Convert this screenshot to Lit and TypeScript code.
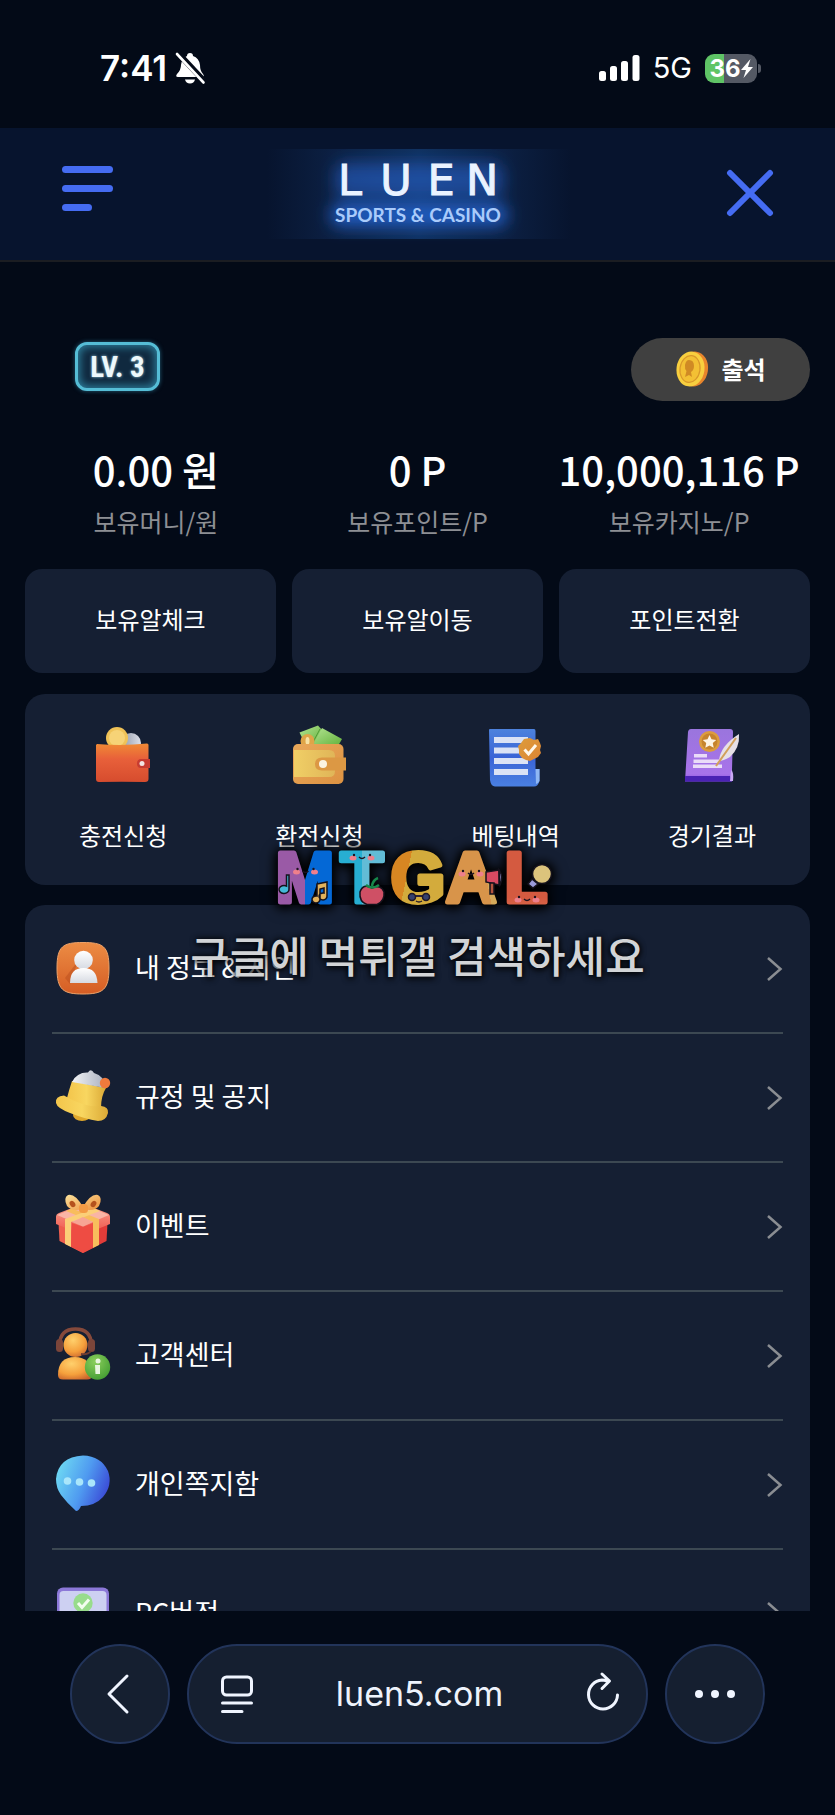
import { LitElement, html, svg, css } from "lit";
import { customElement } from "lit/decorators.js";

/* ---------- shortcut icons (60 x 60) ---------- */

const walletIcon = svg`
  <defs>
    <linearGradient id="w1" x1="0" y1="0" x2="0" y2="1"><stop offset="0" stop-color="#f08a35"/><stop offset=".4" stop-color="#e8603a"/><stop offset="1" stop-color="#d64c2e"/></linearGradient>
    <linearGradient id="w2" x1="0" y1="0" x2="1" y2="0"><stop offset="0" stop-color="#8f97a8"/><stop offset="1" stop-color="#dcdfe8"/></linearGradient>
  </defs>
  <circle cx="38" cy="17" r="10" fill="url(#w2)"/>
  <circle cx="24" cy="12" r="11" fill="#efc257"/>
  <circle cx="24" cy="12" r="8" fill="#f6d377"/>
  <path d="M4 18 Q30 20 54 17.500 Q55.500 17.500 55.500 19 V53 Q55.500 56 52 56 Q28 55.500 6 56 Q3 56 3 53 V19 Z" fill="url(#w1)"/>
  <path d="M48 33 H57 V42 H48 Q44 42 44 37.500 Q44 33 48 33Z" fill="#c73c31"/>
  <circle cx="49" cy="37.500" r="2.500" fill="#f3e6e4"/>`;

const cashIcon = svg`
  <defs>
    <linearGradient id="c1" x1="0" y1="0" x2="1" y2="1"><stop offset="0" stop-color="#e9a85a"/><stop offset="1" stop-color="#dd9242"/></linearGradient>
    <linearGradient id="c2" x1="0" y1="0" x2="1" y2="0"><stop offset="0" stop-color="#f0cf66"/><stop offset="1" stop-color="#e0b558"/></linearGradient>
    <linearGradient id="c3" x1="0" y1="0" x2="1" y2="1"><stop offset="0" stop-color="#b4e493"/><stop offset="1" stop-color="#62b13a"/></linearGradient>
  </defs>
  <path d="M10.500 6.500 L29 -.500 L33 4 L33 20 H17Z" fill="url(#c3)"/>
  <path d="M33 2 L53 13 L49 20 H23Z" fill="url(#c3)"/>
  <path d="M31 3 L23 18" stroke="#4f9d35" stroke-width="1"/>
  <circle cx="18.500" cy="15" r="7" fill="#dfa548"/><ellipse cx="18.500" cy="15" rx="2" ry="4" fill="#f8e2a5"/>
  <rect x="4" y="18" width="50.500" height="40" rx="5" fill="url(#c1)"/>
  <path d="M5 24 H40 Q46 24 46 30 V45 Q46 51 40 51 H5Z" fill="url(#c2)"/>
  <path d="M33 31.500 H57 V44.500 H33 Q26 44.500 26 38 Q26 31.500 33 31.500Z" fill="#dc9844"/>
  <circle cx="34" cy="38" r="4" fill="#fbf3e2"/>`;

const betIcon = svg`
  <defs>
    <linearGradient id="b1" x1="0" y1="0" x2="0" y2="1"><stop offset="0" stop-color="#4d82dd"/><stop offset=".5" stop-color="#3a63d6"/><stop offset="1" stop-color="#4a80e2"/></linearGradient>
    <linearGradient id="b2" x1="0" y1="0" x2="1" y2="1"><stop offset="0" stop-color="#dd9c3c"/><stop offset="1" stop-color="#dd8433"/></linearGradient>
  </defs>
  <path d="M3 4 Q3 3 4 3 H48 Q49.500 3 49.500 5 V43 H53.500 V55 Q52 60.500 48 60.500 H9 Q5 60.500 4 54Z" fill="url(#b1)"/>
  <path d="M49.500 43 H53.500 V55 Q52 58 50 58Z" fill="#8fb7f4"/>
  <g fill="#dbe2f5"><rect x="8" y="11" width="34" height="6"/><rect x="8" y="21.500" width="34" height="6"/><rect x="8" y="32" width="34" height="6"/><rect x="8" y="43" width="34" height="6"/></g>
  <path d="M44 12 l4 2 4 -1 2 4 1 3 -1 4 1 3 -3 4 -4 2 -4 2 -4 -1 -4 -2 -3 -4 0 -4 -1 -4 3 -3 3 -4z" fill="url(#b2)"/>
  <path d="M38.500 23.500 l4 4.500 l7.500 -9" fill="none" stroke="#fff6e8" stroke-width="3"/>`;

const resultIcon = svg`
  <defs>
    <linearGradient id="r1" x1="0" y1="0" x2="0" y2="1"><stop offset="0" stop-color="#9a75dd"/><stop offset=".85" stop-color="#a873ea"/><stop offset="1" stop-color="#8c52e0"/></linearGradient>
  </defs>
  <path d="M9 3 H48 Q51 3 51 6 L50 44 Q51 52 50 55.500 H3 L6 6 Q6.500 3 9 3Z" fill="url(#r1)"/>
  <path d="M3 50 H48 L50 55.500 H3Z" fill="#4a22b4"/>
  <path d="M49 44 Q52 46 51 55 L48 55Z" fill="#c9a8f4"/>
  <circle cx="27.500" cy="15.500" r="10.500" fill="#dc9c3e"/><circle cx="27.500" cy="15.500" r="8" fill="#c6832d"/>
  <path d="M27.500 9 l2 4.300 4.700 .6 -3.400 3.200 .9 4.700 -4.200 -2.300 -4.200 2.300 .9 -4.700 -3.400 -3.200 4.700 -.6z" fill="#fdf3e4"/>
  <g fill="#eadcf8"><rect x="12" y="28" width="13" height="3.500"/><rect x="11.500" y="33.500" width="26" height="3.500"/><rect x="11" y="38.500" width="29" height="3.500"/></g>
  <path d="M57 8 Q58 22 48 31 Q41 35 37 35 Q38 20 57 8Z" fill="#e6e0e6"/>
  <path d="M54 12 L34 40" stroke="#d2a05a" stroke-width="2"/>`;

/* ---------- menu icons (56 x 56) ---------- */

const personIcon = svg`
  <defs>
    <linearGradient id="p1" x1="0" y1="0" x2="0" y2="1"><stop offset="0" stop-color="#ec8c44"/><stop offset="1" stop-color="#d55d24"/></linearGradient>
    <linearGradient id="p2" x1="0" y1="0" x2="0" y2="1"><stop offset="0" stop-color="#ffffff"/><stop offset="1" stop-color="#d6dae2"/></linearGradient>
  </defs>
  <path d="M28 1.500 C48 1.500 54 5 54 27 C54 49 48 53 28 53 C8 53 2 49 2 27 C2 5 8 1.500 28 1.500Z" fill="url(#p1)" stroke="#eda269" stroke-width="1"/>
  <path d="M15 43 L23 20 L10 37Z" fill="#b94e1e" opacity=".5"/>
  <circle cx="28.500" cy="19" r="9.300" fill="url(#p2)"/>
  <path d="M15 42 Q15 27 28.500 27 Q42 27 42.500 42Z" fill="url(#p2)"/>`;

const bellIcon = svg`
  <defs>
    <linearGradient id="l1" x1="0" y1="0" x2="1" y2="0"><stop offset="0" stop-color="#f3c54b"/><stop offset=".5" stop-color="#f8d660"/><stop offset="1" stop-color="#dba936"/></linearGradient>
    <linearGradient id="l2" x1="0" y1="0" x2="1" y2="0"><stop offset="0" stop-color="#f2f3f6"/><stop offset="1" stop-color="#a9b0bf"/></linearGradient>
  </defs>
  <ellipse cx="27" cy="45" rx="9" ry="6" fill="#e0a82c"/>
  <path d="M17 11 Q14 20 12 28 L28 40 L46 38 Q46 26 51 18 Z" fill="url(#l1)"/>
  <path d="M17 12 Q22 2 33 2.500 Q36 -2 39 3 Q50 6 50.500 18 Q34 15 17 12Z" fill="url(#l2)"/>
  <path d="M9 25.500 Q0 26 1 33 Q2 38 15 43 Q30 49 43 51 Q51 51 53 43 Q54 37 46 36 Q30 38 9 25.500Z" fill="url(#l1)"/>
  <circle cx="50" cy="13" r="5.200" fill="#f07a3c"/>`;

const giftIcon = svg`
  <defs>
    <linearGradient id="g1" x1="0" y1="0" x2="0" y2="1"><stop offset="0" stop-color="#f9a28f"/><stop offset="1" stop-color="#ef5148"/></linearGradient>
    <linearGradient id="g2" x1="0" y1="0" x2="1" y2="1"><stop offset="0" stop-color="#fbe29c"/><stop offset="1" stop-color="#ee8f3a"/></linearGradient>
  </defs>
  <path d="M3.500 24 L28 33 V54 L4.500 42Z" fill="#ee5d4e"/>
  <path d="M52.500 24 L28 33 V54 L51.500 42Z" fill="#e23c39"/>
  <path d="M1 18 Q1 15 4 14 L25 6 Q28 5 31 6 L52 14 Q55 15 55 18 V25 L28 36 L1 25Z" fill="url(#g1)"/>
  <path d="M2 16 L28 27 L54 16 L28 5.500Z" fill="#f9b5a6"/>
  <path d="M11 12 L17 9.500 L44 20 V46 L38 49 V23Z" fill="#f8bd5c"/>
  <path d="M45 12 L39 9.500 L10 20 V45 L16 48 V23Z" fill="#fbcf78"/>
  <path d="M17 24 L28 28 L38 24 V49 L28 54 L16 48Z" fill="#ee4c43"/>
  <path d="M17 23 L28 27.500 L38 23 L28 18Z" fill="#f7a595"/>
  <path d="M28 8 Q20 -6 13 -4 Q8 -1 12 7 Q17 13 28 10 Q39 13 44 7 Q48 -1 43 -4 Q36 -6 28 8Z" fill="url(#g2)"/>
  <ellipse cx="17.500" cy="5" rx="2.500" ry="3.500" fill="#b5521d" transform="rotate(-35 17.500 5)"/><ellipse cx="38.500" cy="5" rx="2.500" ry="3.500" fill="#b5521d" transform="rotate(35 38.500 5)"/>
  <rect x="24" y="5" width="9" height="9" rx="3.500" fill="#f39a44"/>`;

const supportIcon = svg`
  <defs>
    <radialGradient id="s1" cx=".4" cy=".3" r=".8"><stop offset="0" stop-color="#ffd06c"/><stop offset=".6" stop-color="#f5a03c"/><stop offset="1" stop-color="#c9622c"/></radialGradient>
    <radialGradient id="s2" cx=".4" cy=".3" r=".8"><stop offset="0" stop-color="#8bcf5c"/><stop offset="1" stop-color="#3f9a30"/></radialGradient>
  </defs>
  <path d="M3 47 Q3 29 20 29 Q36 29 37 47 Q37 51.500 32 51.500 H8 Q3 51.500 3 47Z" fill="url(#s1)"/>
  <circle cx="20.500" cy="17" r="12" fill="url(#s1)"/>
  <path d="M4.500 17 Q5 1 20.500 1 Q36 1 36.500 17" fill="none" stroke="#85493b" stroke-width="3.500"/>
  <rect x="1" y="11" width="7" height="13" rx="3.500" fill="#7b453a"/><rect x="33" y="11" width="7" height="13" rx="3.500" fill="#7b453a"/>
  <path d="M36 23 Q33 27 26 26" fill="none" stroke="#6c3c33" stroke-width="2"/>
  <circle cx="42.500" cy="39" r="12.700" fill="url(#s2)"/>
  <circle cx="43" cy="33" r="2.500" fill="#e9f6df"/><path d="M40 37 H45 V46 H40.500Z" fill="#e9f6df"/>`;

const chatIcon = svg`
  <defs>
    <linearGradient id="m1" x1="0" y1=".2" x2="1" y2=".6"><stop offset="0" stop-color="#6fdcf3"/><stop offset=".55" stop-color="#4f9af0"/><stop offset="1" stop-color="#3a49d6"/></linearGradient>
  </defs>
  <path d="M28 -1.500 Q46 -1 53 14 Q58 28 48 40 Q40 49 26 49 Q24 54 21 54 Q12 46 6 38 Q1 31 1 22 Q3 0 28 -1.500Z" fill="url(#m1)"/>
  <g fill="#a9e6fb"><circle cx="12.500" cy="24" r="3.800"/><circle cx="24.500" cy="25" r="3.800"/><circle cx="36.500" cy="26" r="3.800"/></g>`;

const screenIcon = svg`
  <rect x="2" y="1.500" width="52" height="44" rx="6" fill="#8c78d8"/>
  <rect x="4.500" y="5" width="47" height="40" rx="4" fill="#cdd0f2"/>
  <circle cx="28" cy="17" r="9.700" fill="#98dc8c"/>
  <path d="M23 17 l4 4.500 l7 -8" fill="none" stroke="#f2fdf0" stroke-width="3"/>`;

const shortcuts = [
  { label: "충전신청", icon: walletIcon },
  { label: "환전신청", icon: cashIcon },
  { label: "베팅내역", icon: betIcon },
  { label: "경기결과", icon: resultIcon },
];

const menu = [
  { label: "내 정보 & 지인", icon: personIcon },
  { label: "규정 및 공지", icon: bellIcon },
  { label: "이벤트", icon: giftIcon },
  { label: "고객센터", icon: supportIcon },
  { label: "개인쪽지함", icon: chatIcon },
  { label: "PC버전", icon: screenIcon },
];

const balances = [
  { value: "0.00 원", label: "보유머니/원" },
  { value: "0 P", label: "보유포인트/P" },
  { value: "10,000,116 P", label: "보유카지노/P" },
];

const reset = css`
  * { box-sizing: border-box; }
  button, input { font: inherit; color: inherit; border: 0; background: none; padding: 0; margin: 0; }
  button { cursor: pointer; }
  a { color: inherit; text-decoration: none; }
  svg { display: block; overflow: visible; }
`;

@customElement("status-bar")
class StatusBar extends LitElement {
  static styles = [reset, css`
    :host { display: flex; align-items: center; justify-content: space-between; height: 128px; padding: 8px 74px 0 100px; color: #fff; font-family: Inter, sans-serif; }
    .side { display: flex; align-items: center; }
    .left { gap: 8px; }
    .right { gap: 13px; }
    .time { font-size: 35px; font-weight: 600; line-height: 40px; }
    .net { font-size: 29px; line-height: 40px; }
    .battery { display: flex; align-items: center; gap: 1px; }
    .cell { display: flex; align-items: center; justify-content: center; width: 52px; height: 29px; border-radius: 9px; background: linear-gradient(90deg, #5fc466 36%, #545964 36%); font-size: 24px; font-weight: 700; line-height: 29px; }
    .nub { width: 3px; height: 9px; border-radius: 0 3px 3px 0; background: #545964; }
  `];
  render() {
    return html`
      <div class="side left">
        <span class="time">7:41</span>
        <svg width="30" height="32" viewBox="0 0 30 32" fill="#fff">
          <path d="M15 1 Q18 1 18 4 Q24 6 25 13 Q25 19 28 22 Q30 25 27 25 H3 Q0 25 2 22 Q6 18 6 13 Q7 6 12 4 Q12 1 15 1Z"/>
          <path d="M10 27.500 H20 Q19 31.500 15 31.500 Q11 31.500 10 27.500Z"/>
          <path d="M3 1 L30 30" stroke="#040b18" stroke-width="6"/>
          <path d="M2 2 L28.500 30.500" stroke="#fff" stroke-width="2.600" stroke-linecap="round"/>
        </svg>
      </div>
      <div class="side right">
        <svg width="41" height="26" viewBox="0 0 41 26" fill="#fff">
          <rect x="0" y="16" width="7" height="10" rx="2.500"/><rect x="11" y="11" width="7" height="15" rx="2.500"/><rect x="22" y="6" width="7" height="20" rx="2.500"/><rect x="33.500" y="0" width="7" height="26" rx="2.500"/>
        </svg>
        <span class="net">5G</span>
        <div class="battery">
          <div class="cell"><span>36</span><svg width="12" height="19" viewBox="0 0 12 19" fill="#fff"><path d="M9.500 0 L0 11 H5 L2.500 19 L12 8 H7Z"/></svg></div>
          <div class="nub"></div>
        </div>
      </div>`;
  }
}

@customElement("site-header")
class SiteHeader extends LitElement {
  static styles = [reset, css`
    :host { display: flex; align-items: center; justify-content: space-between; height: 134px; padding: 0 59px 0 61px; background: #07142e; border-bottom: 2px solid #1b1d22; }
    .logo { display: block; background: linear-gradient(90deg, rgba(10, 27, 58, 0), #0c2043 22%, #10305f 50%, #0c2043 78%, rgba(10, 27, 58, 0)); }
    .word { font: 43px "DejaVu Sans", sans-serif; fill: #eaf3ff; stroke: #eaf3ff; stroke-width: 1; }
    .tag { font: 700 19px Lato, sans-serif; fill: #a9cbfb; }
  `];
  render() {
    return html`
      <button aria-label="메뉴">
        <svg width="52" height="60" viewBox="0 0 52 60" fill="#456cf2">
          <rect x="1" y="2" width="51" height="7" rx="3.500"/><rect x="1" y="21" width="51" height="7" rx="3.500"/><rect x="1" y="40" width="30" height="7" rx="3.500"/>
        </svg>
      </button>
      <a class="logo" href="#" aria-label="LUEN SPORTS & CASINO">
        <svg width="304" height="90" viewBox="0 0 304 90">
          <defs><filter id="glow" x="-30%" y="-80%" width="160%" height="260%"><feGaussianBlur stdDeviation="8"/></filter></defs>
          <g filter="url(#glow)" fill="#2360c8"><rect x="68" y="14" width="168" height="34" rx="10" opacity=".6"/><rect x="64" y="55" width="176" height="22" rx="8" opacity=".95"/></g>
          <g class="word" text-anchor="middle">
            <text x="83" y="46">L</text><text x="129" y="46">U</text><text x="174" y="46">E</text><text x="215" y="46">N</text>
          </g>
          <text class="tag" x="151" y="73" text-anchor="middle">SPORTS &amp; CASINO</text>
        </svg>
      </a>
      <button aria-label="닫기">
        <svg width="52" height="52" viewBox="0 0 52 52" fill="none" stroke="#456cf2" stroke-width="6" stroke-linecap="round"><path d="M6 5 L46 45 M46 5 L6 45"/></svg>
      </button>`;
  }
}

@customElement("account-panel")
class AccountPanel extends LitElement {
  static styles = [reset, css`
    :host { display: block; }
    .profile { display: flex; align-items: center; justify-content: space-between; padding-left: 50px; }
    .level { display: flex; align-items: center; justify-content: center; width: 85px; height: 49px; margin-top: -6px; border: 3px solid #55bdd6; border-radius: 12px; background: #10293f; box-shadow: inset 0 0 9px 2px #2d7f9c, 0 0 4px #235f78; color: #eef8fb; font: 29px "Liberation Sans Narrow", "Roboto Condensed", Roboto, sans-serif; font-weight: 700; text-shadow: 0 0 3px #9cd5e6; white-space: nowrap; }
    .attend { display: flex; align-items: center; justify-content: center; gap: 12px; width: 179px; height: 63px; padding-bottom: 1px; border-radius: 32px; background: #404040; color: #fff; font-size: 24px; font-weight: 700; line-height: 36px; }
    .balances { display: grid; grid-template-columns: repeat(3, 1fr); margin: 40px 0 0; text-align: center; }
    .item { display: flex; flex-direction: column-reverse; gap: 6px; }
    dt { color: #8d8f94; font-size: 25px; line-height: 36px; white-space: nowrap; }
    dd { margin: 0; color: #fff; font-size: 40px; font-weight: 500; line-height: 56px; white-space: nowrap; }
    .actions { display: grid; grid-template-columns: repeat(3, 1fr); gap: 16px; margin-top: 30px; }
    .action { height: 104px; padding-bottom: 5px; border-radius: 17px; background: #151f33; color: #fff; font-size: 24px; line-height: 36px; }
  `];
  render() {
    return html`
      <div class="profile">
        <span class="level">LV. 3</span>
        <button class="attend">
          <svg width="34" height="36" viewBox="0 0 34 36">
            <ellipse cx="19" cy="18" rx="14" ry="17.500" fill="#e8852c" transform="rotate(8 19 18)"/>
            <ellipse cx="15.500" cy="18" rx="14" ry="17.500" fill="#f8cf3f" transform="rotate(8 15.500 18)"/>
            <ellipse cx="15" cy="18" rx="10" ry="13.500" fill="#f3c034" stroke="#d9982a" stroke-width="1.200" transform="rotate(8 15 18)"/>
            <path d="M14 9 Q19 9 19 15 Q19 19 16 21 L17 26 L14 24 L10 26 L11.500 20 Q9.500 18 10 14 Q11 9 14 9Z" fill="#d08a24"/>
          </svg>
          출석
        </button>
      </div>
      <dl class="balances">
        ${balances.map((b) => html`<div class="item"><dt>${b.label}</dt><dd>${b.value}</dd></div>`)}
      </dl>
      <div class="actions">
        ${["보유알체크", "보유알이동", "포인트전환"].map((t) => html`<button class="action">${t}</button>`)}
      </div>`;
  }
}

@customElement("promo-mark")
class PromoMark extends LitElement {
  static styles = [reset, css`
    :host { display: flex; flex-direction: column; align-items: center; }
    .letters { filter: drop-shadow(0 0 6px #000) drop-shadow(0 2px 5px #000); }
    .glyphs { font: 700 70px "Liberation Sans", sans-serif; stroke-width: 5; stroke-linejoin: round; }
    .line { margin: 12px 0 0; color: #d2d4d6; font-size: 43px; font-weight: 500; line-height: 64px; white-space: nowrap; text-shadow: 0 0 6px #000, 0 2px 6px rgba(0, 0, 0, 0.8); }
  `];
  face(x: number, y: number, gap = 9) {
    return svg`
      <ellipse cx=${x - gap} cy=${y} rx="3.500" ry="2.500" fill="#ee7f8c"/><ellipse cx=${x + gap} cy=${y} rx="3.500" ry="2.500" fill="#ee7f8c"/>
      <circle cx=${x - gap + 1} cy=${y - 3} r="1.200" fill="#1c1320"/><circle cx=${x + gap - 1} cy=${y - 3} r="1.200" fill="#1c1320"/>
      <path d="M${x - 3} ${y - 1} q3 3 6 0" fill="none" stroke="#1c1320" stroke-width="1.400"/>`;
  }
  render() {
    return html`
      <svg class="letters" width="284" height="64" viewBox="0 0 284 64" role="img" aria-label="MTGAL">
        <defs>
          <linearGradient id="fm"><stop offset=".5" stop-color="#9a5aa6"/><stop offset=".5" stop-color="#0468d6"/></linearGradient>
          <linearGradient id="ft"><stop offset=".5" stop-color="#27aed2"/><stop offset=".5" stop-color="#62bcd6"/></linearGradient>
          <linearGradient id="fg" x2="1" y2=".3"><stop offset=".4" stop-color="#d78622"/><stop offset=".4" stop-color="#d3ab3c"/></linearGradient>
          <linearGradient id="fa" x2="1" y2="-.3"><stop offset=".6" stop-color="#d8944a"/><stop offset=".6" stop-color="#d6aa5a"/></linearGradient>
          <linearGradient id="fl" y2="1" x2="0"><stop offset=".75" stop-color="#d45a40"/><stop offset="1" stop-color="#e0704f"/></linearGradient>
        </defs>
        <g class="glyphs" text-anchor="middle">
          <text x="29" y="56" fill="url(#fm)" stroke="url(#fm)">M</text>
          <text x="86" y="56" fill="url(#ft)" stroke="url(#ft)">T</text>
          <text x="142" y="56" fill="url(#fg)" stroke="url(#fg)">G</text>
          <text x="195" y="56" fill="url(#fa)" stroke="url(#fa)">A</text>
          <text x="250" y="56" fill="url(#fl)" stroke="url(#fl)">L</text>
        </g>
        ${this.face(29.5, 26)}${this.face(86, 12)}${this.face(195, 28)}${this.face(251, 54)}
        <g stroke="#15121c" stroke-width="1.500">
          <path d="M13 29 V43 A5 4 0 1 1 10.500 40 V29Z" fill="#45b9d8"/>
          <path d="M41 38 L51 36 V50 A4 3.500 0 1 1 48 47 V42 L44 43 V53 A4 3.500 0 1 1 41 50Z" fill="#e2b25c"/>
          <path d="M96 42 Q87 37 84 46 Q83 56 91 58.500 H101 Q109 55 108 46 Q105 38 96 42Z" fill="#cf5065"/>
          <path d="M210 26 L223 24 V39 L210 36Z" fill="#d94a62"/><path d="M223 24 Q228 31 224 39Z" fill="#9a9ad8"/><path d="M214 37 H218 V48 H214Z" fill="#b4553e"/>
          <circle cx="266" cy="28" r="9.500" fill="#dcc47c"/><path d="M256 33 L262 38 L257 42 L252 38Z" fill="#9a9ad8"/>
        </g>
        <path d="M90 39 Q96 44 103 39 M96 40 Q97 34 102 32" fill="none" stroke="#16884a" stroke-width="2.500"/>
        <path d="M132 50 H154" stroke="#2a2036" stroke-width="2"/>
        <g fill="#35406e" stroke="#201828" stroke-width="1.500"><circle cx="136" cy="51" r="3.500"/><circle cx="150" cy="51" r="3.500"/></g>
        <path d="M140 55 q3 2 6 0" fill="none" stroke="#201828" stroke-width="1.400"/>
      </svg>
      <p class="line">구글에 먹튀갤 검색하세요</p>`;
  }
}

@customElement("browser-bar")
class BrowserBar extends LitElement {
  static styles = [reset, css`
    :host { display: flex; align-items: flex-start; gap: 17px; padding: 33px 70px 71px; color: #eef3fc; font-family: Inter, sans-serif; }
    .round, .address { height: 100px; border: 2px solid #22345a; border-radius: 50px; background: #151f30; }
    .round { display: flex; align-items: center; justify-content: center; flex: none; width: 100px; }
    .address { display: flex; align-items: center; flex: 1; min-width: 0; padding: 0 26px 0 32px; }
    .url { flex: 1; min-width: 0; height: 44px; text-align: center; font-size: 34px; line-height: 44px; }
  `];
  render() {
    return html`
      <button class="round" aria-label="뒤로">
        <svg width="28" height="40" viewBox="0 0 28 40" fill="none" stroke="#f0f5ff" stroke-width="3" stroke-linecap="round" stroke-linejoin="round"><path d="M21 2 L3 20 L21 38"/></svg>
      </button>
      <div class="address">
        <button aria-label="페이지 메뉴">
          <svg width="32" height="40" viewBox="0 0 32 40" fill="none" stroke="#f0f5ff" stroke-width="3" stroke-linecap="round"><rect x="1.500" y="3" width="29" height="18" rx="4"/><path d="M1.500 29 H30.500 M1.500 37.500 H21"/></svg>
        </button>
        <input class="url" type="text" value="luen5.com" aria-label="주소" />
        <button aria-label="새로고침">
          <svg width="34" height="40" viewBox="0 0 34 40" fill="none" stroke="#f0f5ff" stroke-width="3" stroke-linecap="round" stroke-linejoin="round"><path d="M21 7 Q18 6 16 6 A14.500 14.500 0 1 0 31.500 21 M16 0 L23.500 7 L16 14.500"/></svg>
        </button>
      </div>
      <button class="round" aria-label="더보기">
        <svg width="42" height="10" viewBox="0 0 42 10" fill="#f0f5ff"><circle cx="5" cy="5" r="4"/><circle cx="21" cy="5" r="4"/><circle cx="37" cy="5" r="4"/></svg>
      </button>`;
  }
}

@customElement("app-root")
class AppRoot extends LitElement {
  static styles = [reset, css`
    :host { position: relative; display: flex; flex-direction: column; height: 100vh; overflow: hidden; background: #030a17; color: #fff; font-family: "Noto Sans CJK KR", sans-serif; }
    status-bar, site-header, browser-bar { flex: none; }
    main { position: relative; flex: 1; min-height: 0; overflow: hidden; padding: 76px 25px 0; }
    .shortcuts { display: grid; grid-template-columns: repeat(4, 1fr); margin-top: 21px; padding: 32px 0; border-radius: 20px; background: #151f33; }
    .shortcut { display: flex; flex-direction: column; align-items: center; gap: 31px; font-size: 24px; line-height: 36px; }
    .menu { margin: 20px 0 0; padding: 0 27px; list-style: none; border-radius: 20px; background: #151f33; }
    .row { display: flex; align-items: center; height: 129px; padding-left: 3px; border-bottom: 2px solid #3c4852; font-size: 27px; line-height: 40px; }
    .label { flex: 1; margin-left: 24px; padding-bottom: 4px; }
    .promo { position: absolute; top: 584px; left: 0; right: 0; pointer-events: none; }
  `];
  render() {
    return html`
      <status-bar></status-bar>
      <site-header></site-header>
      <main>
        <account-panel></account-panel>
        <nav class="shortcuts">
          ${shortcuts.map((s) => html`<a class="shortcut" href="#"><svg width="60" height="60" viewBox="0 0 60 60">${s.icon}</svg><span>${s.label}</span></a>`)}
        </nav>
        <ul class="menu">
          ${menu.map((m) => html`<li><a class="row" href="#">
            <svg width="56" height="56" viewBox="0 0 56 56">${m.icon}</svg>
            <span class="label">${m.label}</span>
            <svg width="16" height="24" viewBox="0 0 16 24" fill="none" stroke="#8a8d92" stroke-width="2.500"><path d="M1 1 L13.500 12 L1 23"/></svg>
          </a></li>`)}
        </ul>
        <promo-mark class="promo"></promo-mark>
      </main>
      <browser-bar></browser-bar>`;
  }
}
